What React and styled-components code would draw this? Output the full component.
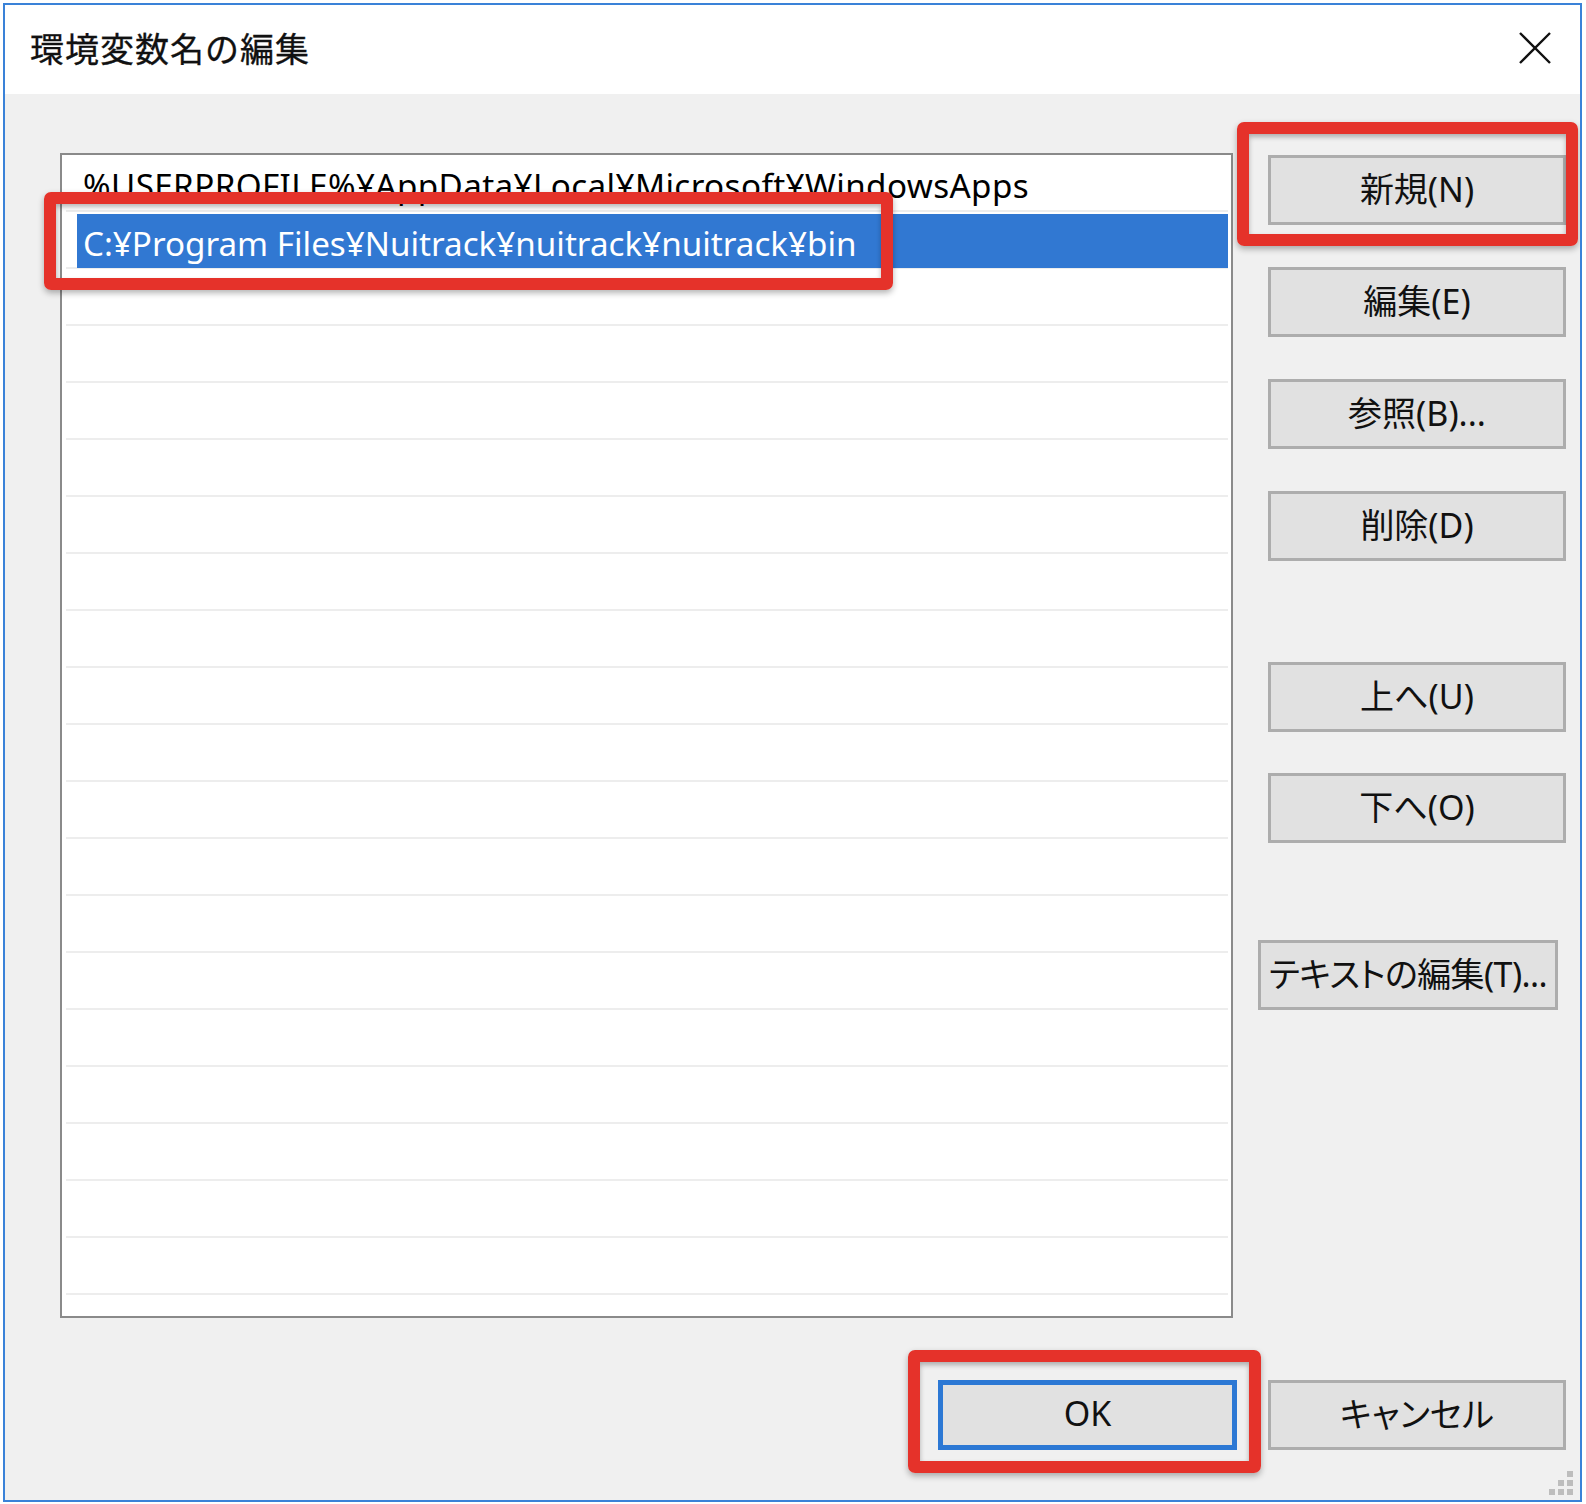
import React from "react";
import styled, { createGlobalStyle } from "styled-components";

const GlobalStyle = createGlobalStyle`
  html, body {
    margin: 0;
    padding: 0;
    background: #ffffff;
  }
  * {
    box-sizing: border-box;
  }
`;

const FONT = `"Noto Sans", "Noto Sans CJK JP", sans-serif`;

const paths = [
  "%USERPROFILE%¥AppData¥Local¥Microsoft¥WindowsApps",
  "C:¥Program Files¥Nuitrack¥nuitrack¥nuitrack¥bin",
];

const App = () => {
  const rows = Array.from({ length: 21 }, (_, i) => paths[i] || "");

  return (
    <>
      <GlobalStyle />
      <Window>
        <TitleBar>
          <Title>環境変数名の編集</Title>
          <CloseButton aria-label="close">
            <svg width="32" height="32" viewBox="0 0 32 32">
              <path d="M1 1 L31 31 M31 1 L1 31" stroke="#111" strokeWidth="2.4" fill="none" />
            </svg>
          </CloseButton>
        </TitleBar>

        <Body>
          <Main>
            <List>
              {rows.map((text, i) => (
                <Row key={i}>
                  <RowText $selected={i === 1} $wide={i === 0}>
                    {text}
                  </RowText>
                </Row>
              ))}
            </List>

            <ButtonColumn>
              <Button>新規(N)</Button>
              <Button $gap={42}>編集(E)</Button>
              <Button $gap={42}>参照(B)...</Button>
              <Button $gap={42}>削除(D)</Button>
              <Button $gap={101}>上へ(U)</Button>
              <Button $gap={41}>下へ(O)</Button>
              <Button $gap={97} $w={300} $shift={-10} $tight>
                テキストの編集(T)...
              </Button>
            </ButtonColumn>
          </Main>

          <Footer>
            <Button $w={299} $default>
              OK
            </Button>
            <Button>キャンセル</Button>
          </Footer>
        </Body>

        {/* red annotation frames over the dialog */}
        <Highlight $x={39} $y={187} $w={849} $h={98} />
        <Highlight $x={1232} $y={117} $w={341} $h={124} />
        <Highlight $x={903} $y={1345} $w={353} $h={123} />

        <Grip width="26" height="26" viewBox="0 0 26 26">
          <rect x="19" y="1" width="6" height="6" />
          <rect x="10" y="10" width="6" height="6" />
          <rect x="19" y="10" width="6" height="6" />
          <rect x="1" y="19" width="6" height="6" />
          <rect x="10" y="19" width="6" height="6" />
          <rect x="19" y="19" width="6" height="6" />
        </Grip>
      </Window>
    </>
  );
};

// Styled Components
const Window = styled.div`
  position: relative;
  margin: 3px 0 0 3px;
  width: 1579px;
  height: 1499px;
  border: 2px solid #3a82d8;
  display: flex;
  flex-direction: column;
  font-family: ${FONT};
  background: #f0f0f0;
  overflow: hidden;
`;

const TitleBar = styled.div`
  height: 89px;
  flex-shrink: 0;
  background: #ffffff;
  display: flex;
  align-items: center;
  justify-content: space-between;
  padding: 0 29px 0 25px;
`;

const Title = styled.div`
  font-size: 34px;
  letter-spacing: 1px;
  color: #111111;
  margin-top: -5px;
  -webkit-text-stroke: 0.3px #111111;
`;

const CloseButton = styled.div`
  width: 32px;
  height: 32px;
  display: flex;
  margin-top: -4px;
`;

const Body = styled.div`
  flex: 1;
  padding: 59px 11px 0 55px;
  display: flex;
  flex-direction: column;
`;

const Main = styled.div`
  display: flex;
  align-items: flex-start;
  gap: 35px;
`;

const List = styled.div`
  width: 1173px;
  height: 1165px;
  flex-shrink: 0;
  border: 2px solid #8a8a8a;
  background: #ffffff;
  padding: 0 3px 0 4px;
  overflow: hidden;
`;

const Row = styled.div`
  height: 57px;
  border-bottom: 2px solid #ededed;
  display: flex;
`;

const RowText = styled.div`
  flex: 1;
  display: flex;
  align-items: center;
  white-space: nowrap;
  font-size: 33.2px;
  letter-spacing: ${(p) => (p.$wide ? "0.4px" : "0")};
  color: ${(p) => (p.$selected ? "#ffffff" : "#000000")};
  background: ${(p) => (p.$selected ? "#3178d2" : "transparent")};
  margin: ${(p) => (p.$selected ? "2px 0 0 11px" : "0")};
  height: ${(p) => (p.$selected ? "54px" : "55px")};
  padding: ${(p) => (p.$selected ? "4px 0 0 6px" : "6px 0 0 17px")};
`;

const ButtonColumn = styled.div`
  width: 298px;
  padding-top: 2px;
  display: flex;
  flex-direction: column;
`;

const Button = styled.button`
  width: ${(p) => p.$w || 298}px;
  height: 70px;
  margin-top: ${(p) => p.$gap || 0}px;
  margin-left: ${(p) => p.$shift || 0}px;
  flex-shrink: 0;
  background: #e1e1e1;
  border: ${(p) => (p.$default ? "5px solid #2c78d4" : "3px solid #adadad")};
  font-family: ${FONT};
  font-feature-settings: "palt";
  font-size: 34px;
  letter-spacing: ${(p) => (p.$tight ? "-0.6px" : "0")};
  color: #111;
  padding: 0 0 5px;
  white-space: nowrap;
  display: flex;
  align-items: center;
  justify-content: center;
`;

const Footer = styled.div`
  margin-top: 62px;
  padding-right: 3px;
  display: flex;
  justify-content: flex-end;
  gap: 31px;
`;

const Highlight = styled.div`
  position: absolute;
  left: ${(p) => p.$x}px;
  top: ${(p) => p.$y}px;
  width: ${(p) => p.$w}px;
  height: ${(p) => p.$h}px;
  border: 12px solid #e5322a;
  border-radius: 7px;
  box-shadow: 0 3px 6px rgba(0, 0, 0, 0.3), inset 0 3px 5px rgba(0, 0, 0, 0.28);
  pointer-events: none;
`;

const Grip = styled.svg`
  position: absolute;
  right: 6px;
  bottom: 4px;
  fill: #bdbdbd;
`;

export default App;
